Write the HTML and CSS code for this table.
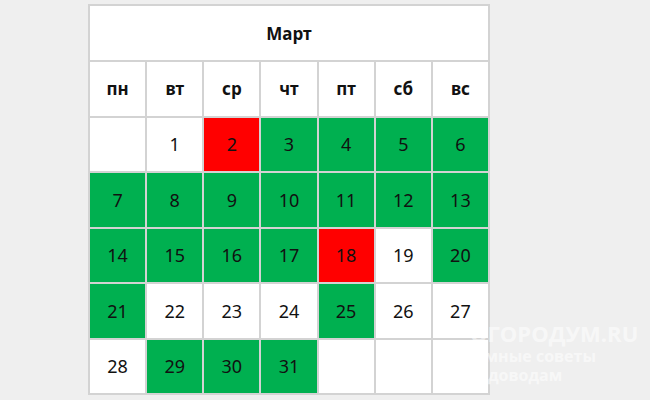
FILE: index.html
```html
<!DOCTYPE html>
<html lang="ru">
<head>
<meta charset="utf-8">
<link rel="stylesheet" href="styles.css">
</head>
<body>
<div class="page">
  <div class="cal">
    <div class="cell title">Март</div>
    <div class="cell wd">пн</div><div class="cell wd">вт</div><div class="cell wd">ср</div><div class="cell wd">чт</div><div class="cell wd">пт</div><div class="cell wd">сб</div><div class="cell wd">вс</div>

    <div class="cell"></div><div class="cell">1</div><div class="cell r">2</div><div class="cell g">3</div><div class="cell g">4</div><div class="cell g">5</div><div class="cell g">6</div>
    <div class="cell g">7</div><div class="cell g">8</div><div class="cell g">9</div><div class="cell g">10</div><div class="cell g">11</div><div class="cell g">12</div><div class="cell g">13</div>
    <div class="cell g">14</div><div class="cell g">15</div><div class="cell g">16</div><div class="cell g">17</div><div class="cell r">18</div><div class="cell">19</div><div class="cell g">20</div>
    <div class="cell g">21</div><div class="cell">22</div><div class="cell">23</div><div class="cell">24</div><div class="cell g">25</div><div class="cell">26</div><div class="cell">27</div>
    <div class="cell">28</div><div class="cell g">29</div><div class="cell g">30</div><div class="cell g">31</div><div class="cell"></div><div class="cell"></div><div class="cell"></div>
  </div>
</div>
<div class="watermark">
  <div class="wm-site">ОГОРОДУМ.RU</div>
  <div class="wm-tag wm-indent">Умные советы</div>
  <div class="wm-tag">садоводам</div>
</div>
</body>
</html>
```

FILE: styles.css
```css
html, body {
  margin: 0;
  padding: 0;
}
body {
  background: #efefef;
  width: 650px;
  height: 400px;
  overflow: hidden;
  position: relative;
  font-family: "Noto Sans", "Open Sans", sans-serif;
  color: #111111;
}
.page {
  padding: 4px 0 0 88px;
}
.cal {
  width: 402px;
  box-sizing: border-box;
  display: grid;
  grid-template-columns: repeat(7, 1fr);
  grid-template-rows: 54px repeat(6, 53.5px);
  gap: 2px;
  padding: 2px;
  background: #d3d3d3;
}
.cell {
  background: #ffffff;
  display: flex;
  align-items: center;
  justify-content: center;
  font-size: 18px;
}
.title {
  grid-column: 1 / -1;
  font-weight: 700;
  font-size: 17px;
}
.wd {
  font-weight: 700;
  font-size: 17px;
}
.g {
  background: #00b050;
}
.r {
  background: #ff0000;
}
.watermark {
  position: absolute;
  left: 470px;
  top: 319px;
  font-family: "Open Sans", sans-serif;
  font-weight: 700;
  color: rgba(255, 255, 255, 0.55);
}
.wm-site {
  font-size: 22px;
  line-height: 28px;
}
.wm-tag {
  font-size: 16px;
  line-height: 19px;
}
.wm-indent {
  padding-left: 4px;
}
```
